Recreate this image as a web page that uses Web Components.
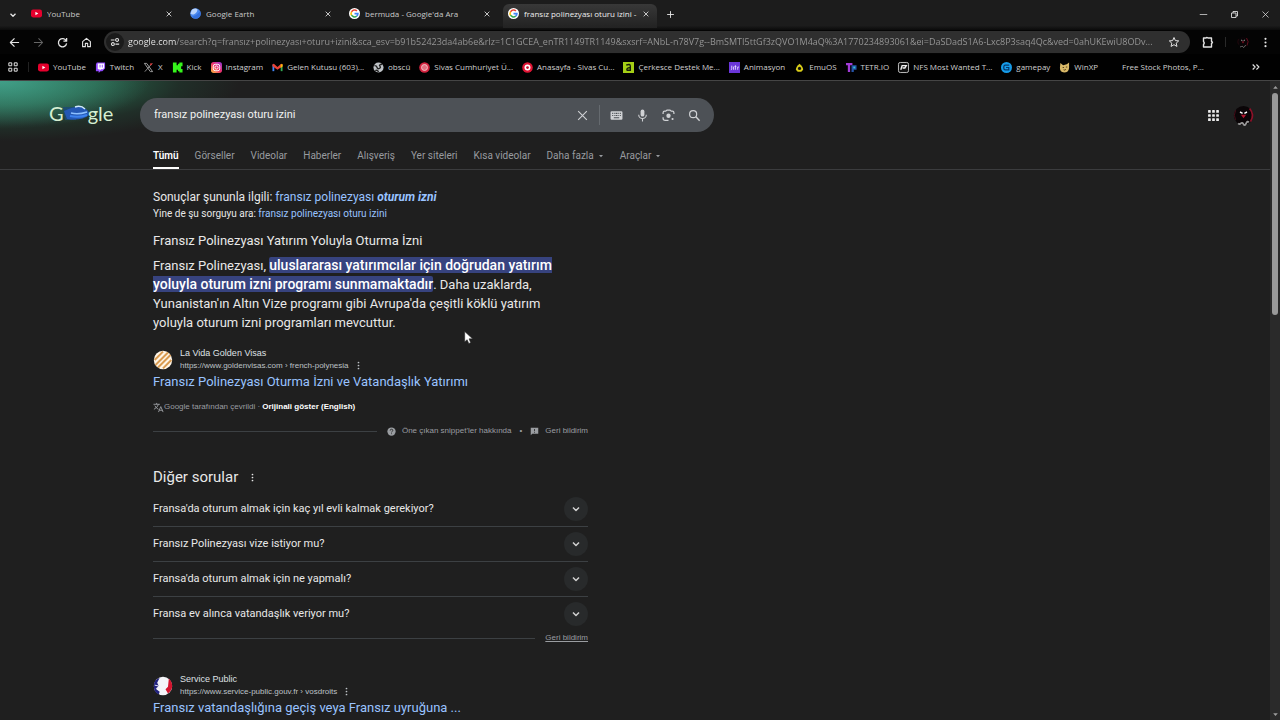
<!DOCTYPE html>
<html lang="tr">
<head>
<meta charset="utf-8">
<title>fransız polinezyası oturu izini - Google'da Ara</title>
<style>
html,body{margin:0;height:100%;background:#1f1f1f;overflow:hidden}
body{font-family:"Open Sans","Noto Sans",sans-serif;color:#e8e8e8}
</style>
</head>
<body>
<browser-window></browser-window>
<script>
const BASE = `*{box-sizing:border-box}a{color:inherit;text-decoration:none}button{font:inherit;color:inherit;background:none;border:0;padding:0;margin:0}`;
const define = (tag, render) => customElements.define(tag, class extends HTMLElement {
  connectedCallback() {
    if (this.shadowRoot) return;
    const get = (n) => this.getAttribute(n) || '';
    const t = document.createElement('template');
    t.innerHTML = render(get, this);
    const s = this.attachShadow({mode: 'open'});
    s.append(t.content.cloneNode(true));
  }
});

const stroke = (d, w = 2) => `<path d="${d}" fill="none" stroke="currentColor" stroke-width="${w}" stroke-linejoin="round"/>`;
const ICONS = {
  down: stroke('M6 9l6 6 6-6', 3),
  close: stroke('M5 5l14 14M19 5L5 19', 2.6),
  thin: stroke('M4 4l16 16M20 4L4 20', 2),
  plus: stroke('M12 3v18M3 12h18', 2.4),
  minus: stroke('M2 12h20', 2),
  restore: stroke('M4 8h12v12H4zM8 8V4h12v12h-4', 2.4),
  back: stroke('M22 12H3M12 3l-9 9 9 9', 2.6),
  forward: stroke('M2 12h19M12 3l9 9-9 9', 2.2),
  reload: stroke('M20 8A9 9 0 1 0 21 14M21 2v7h-7', 2.8),
  home: stroke('M3.500 10L12 3l8.500 7v11h-6v-7h-5v7h-6z', 2.4),
  tune: stroke('M2 7h9M13 17h9', 2.6) + '<circle cx="17" cy="7" r="3.500" fill="none" stroke="currentColor" stroke-width="2.600"/><circle cx="7" cy="17" r="3.500" fill="none" stroke="currentColor" stroke-width="2.600"/>',
  star: stroke('M12 3l2.700 6.200 6.700.600-5 4.500 1.500 6.600-5.900-3.500-5.900 3.500 1.500-6.600-5-4.500 6.700-.600z', 2),
  puzzle: stroke('M3 4h5q1.500-2 4 0h7v7q4 2 0 4v7H3v-5q3-3 0-6z', 2.8),
  dots: '<circle cx="12" cy="4" r="2.300"/><circle cx="12" cy="12" r="2.300"/><circle cx="12" cy="20" r="2.300"/>',
  grid4: stroke('M2 2h7v7H2zM15 2h7v7h-7zM2 15h7v7H2zM15 15h7v7h-7z', 2.4),
  more: stroke('M4 6l6 6-6 6M13 6l6 6-6 6', 2.6),
  apps: [2, 9.500, 17].map(y => [2, 9.500, 17].map(x => `<rect x="${x}" y="${y}" width="5" height="5" rx="1"/>`).join('')).join(''),
  keyboard: '<path fill-rule="evenodd" d="M3 4h18q2 0 2 2v12q0 2-2 2H3q-2 0-2-2V6q0-2 2-2zM4 7v2h2V7zM8 7v2h2V7zM11 7v2h2V7zM14 7v2h2V7zM18 7v2h2V7zM4 11v2h2v-2zM8 11v2h2v-2zM11 11v2h2v-2zM14 11v2h2v-2zM18 11v2h2v-2zM7 15v2h10v-2z"/>',
  mic: '<rect x="8.500" y="1" width="7" height="13" rx="3.500"/>' + stroke('M5 10.500a7 7 0 0 0 14 0M12 17v6', 2),
  lens: stroke('M2 9V7q0-3 3-3h2l2-2h6l2 2h2q3 0 3 3v2M2 15v2q0 4 4 4h6', 2.3) + '<circle cx="12" cy="12.500" r="4"/><circle cx="19.500" cy="18.500" r="2"/>',
  search: '<circle cx="9.500" cy="9.500" r="6.500" fill="none" stroke="currentColor" stroke-width="2.200"/>' + stroke('M14.500 14.500l7 7', 2.6),
  caret: '<path d="M4 8h16l-8 9z"/>',
  help: '<circle cx="12" cy="12" r="11"/><path d="M8.500 9.500q0-3.500 3.500-3.500t3.500 3q0 1.500-1.800 2.700T12 14.500M12 17v2" fill="none" stroke="#1f1f1f" stroke-width="2.200"/>',
  feedback: '<path fill-rule="evenodd" d="M2 2h20v16H6l-4 4zM11 5v6h2V5zM11 13v2h2v-2z"/>',
  translate: stroke('M1 5h14M8 2v3M12 5q-2 7-10 11M4 8q3 6 8 8M12 22l5-12 5 12M14 18h7', 2),
  cursor: '<path d="M5 1v19l4.500-4 3 7 3.500-1.500-3-7h6.500z" fill="#fff" stroke="#222" stroke-width="1"/>',
  blank: '',
  youtube: '<rect x="0" y="3.500" width="24" height="17" rx="4.500" fill="#e6002d"/><path d="M9.500 8v8l6.500-4z" fill="#fff"/>',
  earth: '<circle cx="12" cy="12" r="11.500" fill="#4a88ee"/><path d="M4 4q6-5 12-2 1 7-6 11-5 3-9-1z" fill="#b9d3fb"/><path d="M4 19q10-2 18-12 4 8-3 14-8 5-15-2z" fill="#3470dc"/>',
  google: '<circle cx="12" cy="12" r="12" fill="#fff"/><g fill="none" stroke-width="3.400"><path d="M17.300 6.700A7.500 7.500 0 0 0 5.500 8.300" stroke="#ea4335"/><path d="M5.500 8.300a7.500 7.500 0 0 0 0 7.400" stroke="#fbbc05"/><path d="M5.500 15.700a7.500 7.500 0 0 0 11.300 2" stroke="#34a853"/><path d="M16.800 17.700A7.500 7.500 0 0 0 19.500 12.300H12" stroke="#4285f4"/></g>',
  twitch: '<path d="M4 1h18v13l-6 6h-4l-4 4v-4H2V5z" fill="#9146ff"/><path d="M6 3h14v10l-3 3h-4l-3 3v-3H6z" fill="#fff"/><path d="M11 6v6M16 6v6" stroke="#9146ff" stroke-width="2"/>',
  x: '<path d="M3 3h5l13 18h-5z" fill="none" stroke="#aaa" stroke-width="2"/><path d="M20 3L4 21" stroke="#999" stroke-width="2"/><path d="M15 3h6l-4 5z" fill="#e33"/>',
  kick: '<path d="M2 1h8v6h3V4h3V1h7v8h-3v6h3v8h-7v-3h-3v-3h-3v6H2z" fill="#35f41b"/>',
  instagram: '<defs><linearGradient id="a" x1="0" y1="1" x2="1" y2="0"><stop stop-color="#ffc53d"/><stop offset=".5" stop-color="#f0326a"/><stop offset="1" stop-color="#9038e0"/></linearGradient></defs><rect width="24" height="24" rx="6" fill="url(#a)"/><rect x="5" y="5" width="14" height="14" rx="4" fill="none" stroke="#fff" stroke-width="2"/><circle cx="12" cy="12" r="3.500" fill="none" stroke="#fff" stroke-width="2"/>',
  gmail: '<path d="M1 20V6h4v14z" fill="#4285f4"/><path d="M19 20V6h4v14z" fill="#34a853"/><path d="M1 5l3-1 8 7 8-7 3 1v4l-11 8L1 9z" fill="#ea4335"/><path d="M19 5l4 0v5l-4 3z" fill="#fbbc05"/>',
  globe: '<circle cx="12" cy="12" r="11" fill="#bfc3c7"/><path d="M3 8q5 0 6 4t5 2 1-5 5-4M5 19q5-3 7 3" stroke="#222" stroke-width="3" fill="none"/>',
  sivas: '<circle cx="12" cy="12" r="11.500" fill="#d5233f"/><circle cx="12" cy="12" r="6.500" fill="#e27080" stroke="#f5c6cc" stroke-width="2"/>',
  anasayfa: '<circle cx="12" cy="12" r="11.500" fill="#e01434"/><circle cx="12" cy="12" r="6.500" fill="#fff"/><circle cx="12" cy="12" r="3" fill="#c4122f"/>',
  cerkes: '<path d="M0 0h24v24H0z" fill="#a5cf16"/><path d="M7 7q9-4 9 2v9H9q-3-5 7-6" fill="none" stroke="#17200a" stroke-width="3"/>',
  jitter: '<path d="M0 0h24v24H0z" fill="#6a35d9"/><path d="M6 8v7q0 2-2 2M10 10v7M14 7v10M12 10h4M19 17v-6h3" stroke="#e3d6ff" stroke-width="2" fill="none"/>',
  emuos: '<path d="M12 4q8 7 8 13l-4 4H8l-4-4q0-6 8-13z" fill="#d8cc18"/><circle cx="12" cy="14" r="3.500" fill="#111"/>',
  tetr: '<path d="M0 2h14v5H9v15H4V7H0z" fill="#a33bd8"/><path d="M12 7h11v10h-6v5h-5z" fill="#2455a8"/><path d="M16 10h4v4h-4z" fill="#35c5d8"/>',
  nfs: '<rect x="1" y="1" width="22" height="22" rx="4" fill="#111" stroke="#ccc" stroke-width="2"/><path d="M6 17L9 8h9l-3 5h-5" fill="none" stroke="#eee" stroke-width="3"/>',
  gamepay: '<circle cx="12" cy="12" r="12" fill="#159be8"/><path d="M18 7H9q-3 0-3 5t3 5h8v-5h-6" fill="none" stroke="#073768" stroke-width="2.600"/>',
  winxp: '<path d="M3 2l6 5 8-2 5-4v12q-1 10-11 10Q2 22 2 13z" fill="#d9b968"/><path d="M8 12h3M15 11h3M10 17q3 2 5-1" stroke="#4c3410" stroke-width="2" fill="none"/>',
  avatar: '<circle cx="12" cy="12" r="11" fill="#0a0507"/><path d="M19 4q6 7 1 15" fill="none" stroke="#8d1229" stroke-width="2"/><path d="M3 6q-3 6 0 11" fill="none" stroke="#4d0d19" stroke-width="1"/><path d="M8 8l3 1.500M16 8l-3 1.500" stroke="#fff" stroke-width="1.600"/><path d="M9 11l3 4 3-4z" fill="#b3152f"/><path d="M6 21q1.500 1.500 3 0t3 1 3-1 3-1" fill="none" stroke="#999" stroke-width="2"/>',
  visas: '<circle cx="12" cy="12" r="11" fill="#fff6e8"/><path d="M2 12L12 2M3 18L18 3M6 21L21 6M12 22L22 12" stroke="#d99b51" stroke-width="2.400"/>',
  marianne: '<circle cx="12" cy="12" r="11" fill="#f4f4f8"/><path d="M8 2Q1 4 1 12t6 10l1-3-4-3 3-4-2-4z" fill="#22227e"/><path d="M19 3q4 4 4 9t-5 9l-3-5 3-3z" fill="#d3132d"/><path d="M2 11l5 1-3 3 4 2" stroke="#fff" stroke-width="1" fill="none"/>'
};

define('ui-icon', g => `<style>:host{display:block;flex:none;width:var(--size,12px);height:var(--size,12px)}svg{display:block;width:100%;height:100%;overflow:visible}</style>
<svg viewBox="0 0 24 24" fill="currentColor" aria-hidden="true">${ICONS[g('name')]}</svg>`);

define('icon-button', g => `<style>${BASE}:host{display:block;flex:none}button{display:grid;place-items:center}</style>
<button aria-label="${g('label')}"><ui-icon name="${g('name')}"></ui-icon></button>`);

define('browser-tab', g => `<style>${BASE}
:host{display:block;flex:0 1 154px;min-width:0;height:24px;border-radius:6px 6px 0 0;color:#c9c9c9}
:host([active]){background:linear-gradient(#383838,#222);color:#eee}
div{display:flex;align-items:center;height:100%;padding:0 7px 5px 5px;gap:5px}
.title{flex:1;min-width:0;text-align:left;overflow:hidden;white-space:nowrap;font-size:8px;line-height:14px}
ui-icon{--size:11px}icon-button{--size:8px;color:#ddd}</style>
<div><ui-icon name="${g('icon')}"></ui-icon><button class="title" role="tab">${g('label')}</button><icon-button name="close" label="Kapat"></icon-button></div>`);

define('tab-strip', () => `<style>${BASE}
:host{display:flex;align-items:center;height:30px;padding:4px 10px 0 8px;background:linear-gradient(#1c1c1c 85%,#0b0b0b)}
.tabs{display:flex;gap:5px;flex:0 1 631px;margin:0 9px 0 8px;min-width:0;align-self:flex-end;padding-bottom:2px}
.space{flex:1}icon-button{padding-bottom:5px}
.menu{--size:10px}.new{--size:9px}.win{display:flex;gap:22px;--size:9px;color:#ddd}</style>
<icon-button class="menu" name="down" label="Sekmelerde ara"></icon-button>
<div class="tabs" role="tablist">
<browser-tab icon="youtube" label="YouTube"></browser-tab><browser-tab icon="earth" label="Google Earth"></browser-tab>
<browser-tab icon="google" label="bermuda - Google'da Ara"></browser-tab><browser-tab active icon="google" label="fransız polinezyası oturu izini -"></browser-tab></div>
<icon-button class="new" name="plus" label="Yeni sekme"></icon-button><span class="space"></span>
<div class="win"><icon-button name="minus" label="Simge durumu"></icon-button><icon-button name="restore" label="Geri yükle"></icon-button><icon-button name="thin" label="Pencereyi kapat"></icon-button></div>`);

define('browser-toolbar', () => `<style>${BASE}
:host{display:flex;align-items:center;height:24px;padding:0 9px;background:#040404;color:#e3e3e3}
.nav{display:flex;gap:13px;--size:11px;padding-right:12px}
.off{color:#666}
label{flex:1;min-width:0;display:flex;align-items:center;gap:4px;height:22px;border-radius:11px;background:#2f2f2f;padding:0 10px 0 2px}
.site{width:18px;height:18px;border-radius:9px;background:#1b1b1b;display:grid;place-items:center;--size:10px}
input{flex:1;min-width:0;border:0;outline:0;padding:0;font:9px/16px "Open Sans",sans-serif;color:#999;background:linear-gradient(90deg,#f0f0f0 48px,#999 48px);-webkit-background-clip:text;background-clip:text;-webkit-text-fill-color:transparent}
.end{display:flex;align-items:center;gap:11px;padding-left:12px;--size:12px}
.sep{width:1px;height:10px;background:#292929}.dots{--size:11px}.me{opacity:.7}</style>
<div class="nav"><icon-button name="back" label="Geri"></icon-button><icon-button class="off" name="forward" label="İleri"></icon-button><icon-button name="reload" label="Yenile"></icon-button><icon-button name="home" label="Ana sayfa"></icon-button></div>
<label><span class="site"><ui-icon name="tune"></ui-icon></span><input type="text" aria-label="Adres" value="google.com/search?q=fransız+polinezyası+oturu+izini&amp;sca_esv=b91b52423da4ab6e&amp;rlz=1C1GCEA_enTR1149TR1149&amp;sxsrf=ANbL-n78V7g--BmSMTI5ttGf3zQVO1M4aQ%3A1770234893061&amp;ei=DaSDadS1A6-Lxc8P3saq4Qc&amp;ved=0ahUKEwiU8ODv..."><icon-button name="star" label="Yer işareti"></icon-button></label>
<div class="end"><icon-button name="puzzle" label="Uzantılar"></icon-button><span class="sep"></span><icon-button class="me" name="avatar" label="Profil"></icon-button><icon-button class="dots" name="dots" label="Menü"></icon-button></div>`);

define('bookmark-link', g => `<style>${BASE}:host{display:block;flex:none}a{display:flex;align-items:center;gap:4px;font-size:8px;line-height:14px;white-space:nowrap;color:#d0d0d0}ui-icon{--size:11px}</style>
<a href="#"><ui-icon name="${g('icon')}"></ui-icon>${g('label')}</a>`);

const BOOKMARKS = [['youtube','YouTube'],['twitch','Twitch'],['x','X'],['kick','Kick'],['instagram','Instagram'],['gmail','Gelen Kutusu (603)...'],['globe','obscü'],['sivas','Sivas Cumhuriyet Ü...'],['anasayfa','Anasayfa - Sivas Cu...'],['cerkes','Çerkesce Destek Me...'],['jitter','Animasyon'],['emuos','EmuOS'],['tetr','TETR.IO'],['nfs','NFS Most Wanted T...'],['gamepay','gamepay'],['winxp','WinXP'],['blank','Free Stock Photos, P...']];
define('bookmarks-bar', () => `<style>${BASE}
:host{display:flex;align-items:center;height:26px;padding:0 19px 0 8px;background:#010101;color:#e3e3e3}
nav{flex:1;min-width:0;display:flex;justify-content:space-between;margin:0 47px 0 9px}
.sep{width:1px;height:10px;background:#222;margin-left:10px}icon-button{--size:10px}</style>
<icon-button name="grid4" label="Sekme grupları"></icon-button><span class="sep"></span>
<nav>${BOOKMARKS.map(b => `<bookmark-link icon="${b[0]}" label="${b[1]}"></bookmark-link>`).join('')}</nav>
<icon-button name="more" label="Diğer yer işaretleri"></icon-button>`);

define('doodle-logo', () => `<style>${BASE}:host{display:block}a{display:flex;align-items:center;font:20px/24px Lato,sans-serif;color:#d6efd2;padding-bottom:4px}svg{width:28px;height:16px;margin:0 -2px;flex:none}</style>
<a href="#" aria-label="Google">G<svg viewBox="0 0 28 16"><path d="M1 2h13v13H3z" fill="#1c4a78" opacity=".8"/><path d="M2 6q12-5 16-4 10 2 9 8-7 6-22 4z" fill="#2458b4"/><path d="M13 2q6-2 10 2" stroke="#cfeaff" stroke-width="1.500" fill="none"/><path d="M9 8q7 2 16-1" stroke="#8cc0ff" stroke-width="1.500" fill="none"/><path d="M8 11q9 2 17-1" stroke="#3d82ee" stroke-width="2" fill="none"/></svg>gle</a>`);

define('search-box', () => `<style>${BASE}
:host{display:block;flex:0 1 574px;min-width:0}
form{display:flex;align-items:center;height:34px;border-radius:17px;background:#4d5156;padding:0 13px 0 14px;gap:13px;--size:13px;color:#d0d2d5}
input{flex:1;min-width:0;border:0;outline:0;background:none;padding:0;color:#f1f1f1;font:11px/18px Roboto,sans-serif}
.sep{width:1px;height:20px;background:#656a6f;margin:0 -3px}</style>
<form><input type="text" aria-label="Ara" value="fransız polinezyası oturu izini"><icon-button name="thin" label="Temizle"></icon-button><span class="sep"></span><icon-button name="keyboard" label="Klavye"></icon-button><icon-button name="mic" label="Sesli arama"></icon-button><icon-button name="lens" label="Görsel arama"></icon-button><icon-button name="search" label="Ara"></icon-button></form>`);

define('search-nav', () => `<style>${BASE}
:host{display:block;height:38px;padding:10px 0 0 153px;border-bottom:1px solid #3b3c3e}
nav{display:flex;gap:16px;height:27px;font:10px/27px Roboto,sans-serif;color:#989b9f;white-space:nowrap}
.on{color:#fff;font-weight:600;box-shadow:inset 0 -2px #fff}
button{display:flex;align-items:center;gap:4px;--size:6px}</style>
<nav><a class="on" href="#">Tümü</a><a href="#">Görseller</a><a href="#">Videolar</a><a href="#">Haberler</a><a href="#">Alışveriş</a><a href="#">Yer siteleri</a><a href="#">Kısa videolar</a><button>Daha fazla<ui-icon name="caret"></ui-icon></button><button>Araçlar<ui-icon name="caret"></ui-icon></button></nav>`);

define('search-header', () => `<style>${BASE}
:host{display:block;padding-top:17px}
.row{display:flex;align-items:center}
doodle-logo{flex:0 0 91px;margin-left:49px}
.space{flex:1}.apps{--size:13px;color:#eee}.me{--size:21px;margin:0 16px 0 13px}</style>
<div class="row"><doodle-logo></doodle-logo><search-box></search-box><span class="space"></span><icon-button class="apps" name="apps" label="Google uygulamaları"></icon-button><icon-button class="me" name="avatar" label="Hesap"></icon-button></div>
<search-nav></search-nav>`);

define('result-link', g => `<style>${BASE}
:host{display:block}
.src{display:flex;align-items:center;gap:7px;height:25px;font-family:"Liberation Sans",sans-serif;white-space:nowrap}
.src>ui-icon{--size:20px}
.name{font-size:9px;line-height:12px;color:#dfe1e5}
.url{display:flex;align-items:center;gap:5px;font-size:8px;line-height:13px;color:#bdc1c6}
.url icon-button{--size:9px}
h3{margin:0;font:13px/20px Roboto,sans-serif;color:#99c3ff;white-space:nowrap}</style>
<div class="src"><ui-icon name="${g('icon')}"></ui-icon><div><div class="name">${g('source')}</div><div class="url">${g('url')}<icon-button name="dots" label="Bu sonuç hakkında"></icon-button></div></div></div>
<h3><a href="#">${g('label')}</a></h3>`);

define('question-row', g => `<style>${BASE}
:host{display:block;border-bottom:1px solid #3c4043}
:host(:last-of-type){border-bottom-color:transparent}
button{display:flex;align-items:center;justify-content:space-between;width:100%;height:34px;font:11px/18px Roboto,sans-serif;color:#e8e8e8;text-align:left}
span{display:grid;place-items:center;width:24px;height:24px;border-radius:12px;background:#282a2b;color:#d0d0d0}</style>
<button>${g('label')}<span><ui-icon name="down"></ui-icon></span></button>`);

define('rule-row', () => `<style>:host{display:flex;align-items:center;font:8px/12px "Liberation Sans",sans-serif;color:#9a9da1}hr{flex:1;border:0;height:1px;background:#3c4043;margin:0 10px 0 0}</style><hr><slot></slot>`);

define('search-results', () => `<style>${BASE}
:host{display:block;width:435px;margin-left:153px;padding-top:18px;font-family:Roboto,sans-serif;white-space:nowrap}
a{color:#99c3ff}p,h2{margin:0;font-weight:400}
.fix{font-size:12px;line-height:18px}.orig{font-size:10px;line-height:15px}
.head{margin-top:10px;font-size:13px;line-height:19px}
.answer{margin-top:6px;font-size:13px;line-height:19px}
mark{background:#37437f;color:#fff;font-size:14px;line-height:16px;font-weight:500;border-radius:2px}
.first{margin-top:15px}
.tr{display:flex;align-items:center;margin-top:9px;font:8px/12px "Liberation Sans",sans-serif;color:#9a9da1;--size:11px}
.tr a{color:#fff;font-weight:700}
.about{margin-top:12px}.about a,.fb{color:inherit}
.about ui-icon{--size:9px;margin-right:6px}.dot{margin:0 8px}
.more{display:flex;align-items:center;gap:10px;margin-top:30px;--size:9px}
.more h2{font-size:15px;line-height:20px}
.list{margin-top:5px}.fb{text-decoration:underline}
.second{margin-top:29px}</style>
<p class="fix">Sonuçlar şununla ilgili: <a href="#">fransız polinezyası <b><i>oturum izni</i></b></a></p>
<p class="orig">Yine de şu sorguyu ara: <a href="#">fransız polinezyası oturu izini</a></p>
<h2 class="head">Fransız Polinezyası Yatırım Yoluyla Oturma İzni</h2>
<p class="answer">Fransız Polinezyası, <mark>uluslararası yatırımcılar için doğrudan yatırım<br>yoluyla oturum izni programı sunmamaktadır</mark>. Daha uzaklarda,<br>Yunanistan'ın Altın Vize programı gibi Avrupa'da çeşitli köklü yatırım<br>yoluyla oturum izni programları mevcuttur.</p>
<result-link class="first" icon="visas" source="La Vida Golden Visas" url="https://www.goldenvisas.com › french-polynesia" label="Fransız Polinezyası Oturma İzni ve Vatandaşlık Yatırımı"></result-link>
<div class="tr"><ui-icon name="translate"></ui-icon><span>Google tarafından çevrildi ·&nbsp;</span><a href="#">Orijinali göster (English)</a></div>
<rule-row class="about"><ui-icon name="help"></ui-icon><a href="#">Öne çıkan snippet'ler hakkında</a><span class="dot">•</span><ui-icon name="feedback"></ui-icon><a href="#">Geri bildirim</a></rule-row>
<div class="more"><h2>Diğer sorular</h2><icon-button name="dots" label="Diğer"></icon-button></div>
<div class="list"><question-row label="Fransa'da oturum almak için kaç yıl evli kalmak gerekiyor?"></question-row><question-row label="Fransız Polinezyası vize istiyor mu?"></question-row><question-row label="Fransa'da oturum almak için ne yapmalı?"></question-row><question-row label="Fransa ev alınca vatandaşlık veriyor mu?"></question-row></div>
<rule-row><a class="fb" href="#">Geri bildirim</a></rule-row>
<result-link class="second" icon="marianne" source="Service Public" url="https://www.service-public.gouv.fr › vosdroits" label="Fransız vatandaşlığına geçiş veya Fransız uyruğuna ..."></result-link>`);

define('scroll-rail', () => `<style>:host{display:flex;flex-direction:column;align-items:center;flex:0 0 10px;background:#2a2a2a;padding:3px 0 2px;color:#9d9d9d;--size:7px}
.up{transform:rotate(180deg)}.track{flex:1;width:6px;margin-top:2px}.thumb{height:36%;border-radius:3px;background:#9a9a9a}</style>
<ui-icon class="up" name="caret"></ui-icon><div class="track"><div class="thumb"></div></div><ui-icon name="caret"></ui-icon>`);

define('browser-window', () => `<style>${BASE}
:host{display:flex;flex-direction:column;height:100vh;overflow:hidden}
.view{flex:1;min-height:0;display:flex;border-top:1px solid #454545}
main{flex:1;min-width:0;overflow:hidden;background:radial-gradient(ellipse 150px 48px at 0 0,rgba(80,180,165,.6),transparent),radial-gradient(ellipse 240px 60px at 0 0,#2a7f5c,rgba(40,112,80,.8) 40%,rgba(34,70,54,.4) 75%,transparent),#1f1f1f}
.pointer{position:absolute;left:462px;top:331px;--size:13px}</style>
<tab-strip></tab-strip><browser-toolbar></browser-toolbar><bookmarks-bar></bookmarks-bar>
<div class="view"><main><search-header></search-header><search-results></search-results></main><scroll-rail></scroll-rail></div>
<ui-icon class="pointer" name="cursor"></ui-icon>`);
</script>
</body>
</html>
